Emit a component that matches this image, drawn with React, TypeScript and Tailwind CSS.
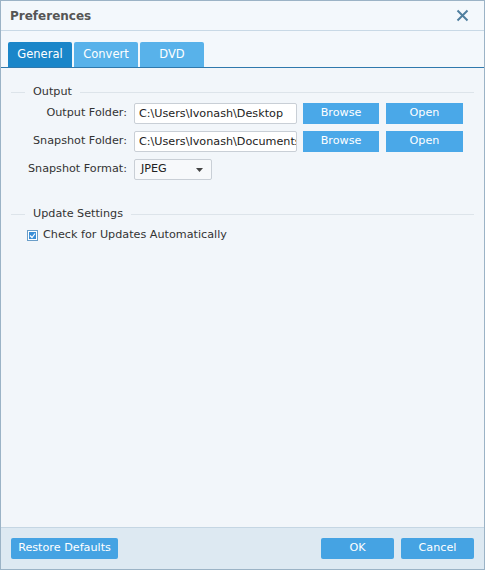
import React from "react";

const font = { fontFamily: '"DejaVu Sans", Verdana, sans-serif' };

function Row({ label, children }: { label: string; children: React.ReactNode }) {
  return (
    <div className="flex items-center h-[21px]">
      <div className="w-[133px] text-right pr-[7px] text-[#333] text-[11.2px]">{label}</div>
      {children}
    </div>
  );
}

function FolderRow({ label, value }: { label: string; value: string }) {
  return (
    <Row label={label}>
      <div className="w-[163px] h-[21px] bg-white border border-[#c9cfd6] rounded-[2px] px-[4px] text-[11.2px] text-[#222] leading-[19px] overflow-hidden whitespace-nowrap">
        {value}
      </div>
      <button className="ml-[6px] w-[76px] h-[21px] bg-[#4aa8e8] text-white text-[11.2px]">Browse</button>
      <button className="ml-[7px] w-[77px] h-[21px] bg-[#4aa8e8] text-white text-[11.2px]">Open</button>
    </Row>
  );
}

function Group({ title }: { title: string }) {
  return (
    <div className="flex items-center h-[14px] pl-[10px] pr-[10px]">
      <div className="w-[14px] h-px bg-[#dde4ea]" />
      <div className="px-[8px] text-[11.2px] text-[#333]">{title}</div>
      <div className="flex-1 h-px bg-[#dde4ea]" />
    </div>
  );
}

export default function App() {
  return (
    <div className="w-[486px] h-[570px] bg-white" style={font}>
      <div className="w-[485px] h-[570px] border border-[#9bb3c6] flex flex-col bg-[#f2f6fa]">
        {/* title */}
        <div className="h-[30px] flex items-center justify-between pl-[9px] pr-[15px] bg-[#f3f8fc] border-b border-[#c8d9e6]">
          <span className="text-[12px] font-bold text-[#555]">Preferences</span>
          <svg width="13" height="13" viewBox="0 0 13 13">
            <path d="M1.5 1.5 L11.5 11.5 M11.5 1.5 L1.5 11.5" stroke="#4f7f9f" strokeWidth="2" />
          </svg>
        </div>
        {/* tabs */}
        <div className="flex items-end h-[37px] pl-[7px] gap-[2px] border-b border-[#2f79ad] bg-[#f3f8fc]">
          <div className="w-[64px] h-[25px] bg-[#1a86c9] rounded-t-[2px] text-white text-[11.5px] flex items-center justify-center">General</div>
          <div className="w-[64px] h-[25px] bg-[#58b2ea] rounded-t-[2px] text-white text-[11.5px] flex items-center justify-center">Convert</div>
          <div className="w-[64px] h-[25px] bg-[#58b2ea] rounded-t-[2px] text-white text-[11.5px] flex items-center justify-center">DVD</div>
        </div>
        {/* content */}
        <div className="flex-1 pt-[17px]">
          <Group title="Output" />
          <div className="flex flex-col gap-[7px] mt-[4px]">
            <FolderRow label="Output Folder:" value="C:\Users\Ivonash\Desktop" />
            <FolderRow label="Snapshot Folder:" value="C:\Users\Ivonash\Documents" />
            <Row label="Snapshot Format:">
              <div className="w-[78px] h-[21px] bg-[#f7f9fb] border border-[#c9cfd6] rounded-[2px] pl-[6px] pr-[8px] flex items-center justify-between text-[11.2px] text-[#222]">
                <span>JPEG</span>
                <svg width="7" height="4" viewBox="0 0 7 4"><path d="M0 0 L7 0 L3.5 4 Z" fill="#444" /></svg>
              </div>
            </Row>
          </div>
          <div className="mt-[27px]">
            <Group title="Update Settings" />
          </div>
          <div className="flex items-center mt-[6px] pl-[26px]">
            <div className="w-[11px] h-[11px] border border-[#6b9ec8] bg-white flex items-center justify-center">
              <div className="w-[7px] h-[7px] bg-[#3a8fd8] flex items-center justify-center">
                <svg width="7" height="7" viewBox="0 0 7 7"><path d="M1 3.5 L3 5.5 L6 1.5" stroke="white" strokeWidth="1.2" fill="none" /></svg>
              </div>
            </div>
            <span className="ml-[5px] text-[11.2px] text-[#333]">Check for Updates Automatically</span>
          </div>
        </div>
        {/* footer */}
        <div className="h-[42px] border-t border-[#c5d6e3] bg-[#dde9f2] flex items-center px-[10px]">
          <button className="w-[107px] h-[21px] rounded-[2px] bg-[#45a3e3] text-white text-[11.2px]">Restore Defaults</button>
          <div className="flex-1" />
          <button className="w-[73px] h-[21px] rounded-[2px] bg-[#45a3e3] text-white text-[11.2px]">OK</button>
          <button className="ml-[7px] w-[73px] h-[21px] rounded-[2px] bg-[#45a3e3] text-white text-[11.2px]">Cancel</button>
        </div>
      </div>
    </div>
  );
}
